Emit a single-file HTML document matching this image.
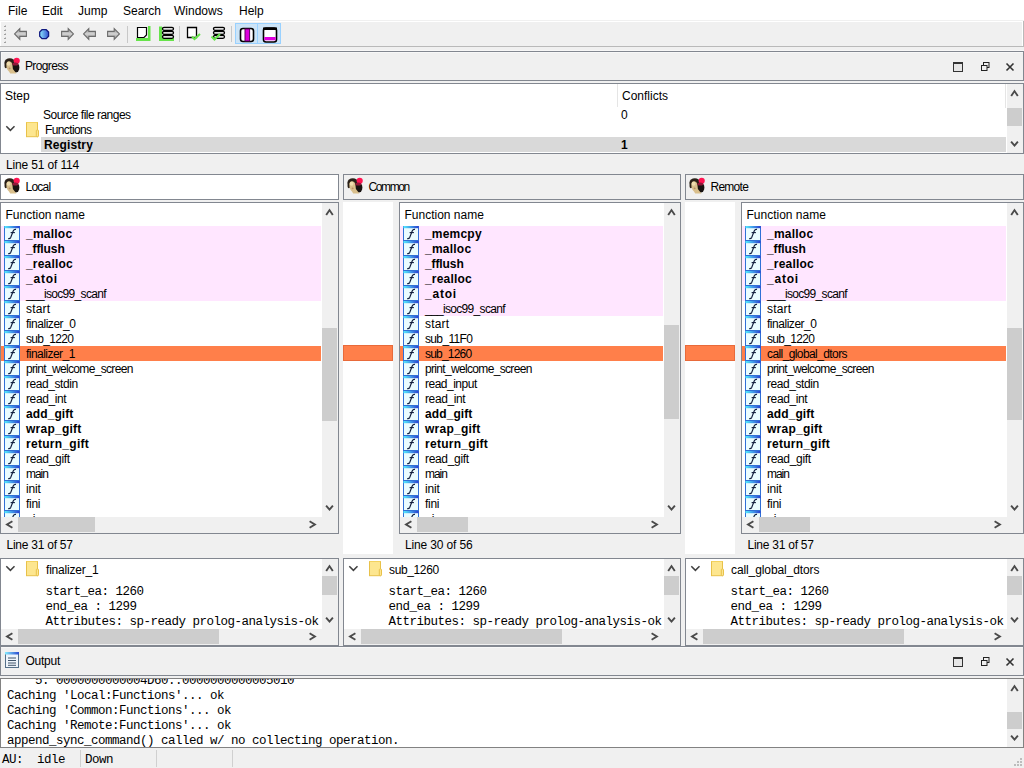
<!DOCTYPE html><html><head><meta charset="utf-8"><style>
html,body{margin:0;padding:0;width:1024px;height:768px;overflow:hidden;background:#f0f0f0;position:relative}
.t{position:absolute;white-space:pre;line-height:1;font-family:"Liberation Sans",sans-serif}
svg{overflow:visible}
</style></head><body>
<svg width="0" height="0" style="position:absolute"><defs>
<linearGradient id="fgrad" x1="0" x2="1"><stop offset="0" stop-color="#5ef"/><stop offset="1" stop-color="#2a3fd0"/></linearGradient>
<linearGradient id="bgrad" x1="0" x2="1"><stop offset="0" stop-color="#8ef"/><stop offset="1" stop-color="#2848d0"/></linearGradient>
</defs></svg>

<div style="position:absolute;left:0px;top:0px;width:1024px;height:20px;background:#fff;"></div>
<div style="position:absolute;left:0px;top:20px;width:1024px;height:1px;background:#f0f0f0;"></div>
<div style="position:absolute;left:0px;top:21px;width:1024px;height:1px;background:#fff;"></div>
<div class="t" style="left:8px;top:5.14px;font-size:12px;font-weight:normal;font-family:'Liberation Sans', sans-serif;color:#000;">File</div>
<div class="t" style="left:42px;top:5.14px;font-size:12px;font-weight:normal;font-family:'Liberation Sans', sans-serif;color:#000;">Edit</div>
<div class="t" style="left:78px;top:5.14px;font-size:12px;font-weight:normal;font-family:'Liberation Sans', sans-serif;color:#000;">Jump</div>
<div class="t" style="left:123px;top:5.14px;font-size:12px;font-weight:normal;font-family:'Liberation Sans', sans-serif;color:#000;">Search</div>
<div class="t" style="left:174px;top:5.14px;font-size:12px;font-weight:normal;font-family:'Liberation Sans', sans-serif;color:#000;">Windows</div>
<div class="t" style="left:239px;top:5.14px;font-size:12px;font-weight:normal;font-family:'Liberation Sans', sans-serif;color:#000;">Help</div>
<div style="position:absolute;left:0px;top:22px;width:1px;height:24px;background:#fff;"></div>
<div style="position:absolute;left:0px;top:46px;width:1024px;height:1px;background:#b9b9b9;"></div>
<div style="position:absolute;left:1022px;top:21px;width:1px;height:25px;background:#fff;"></div>
<div style="position:absolute;left:1023px;top:21px;width:1px;height:26px;background:#b9b9b9;"></div>
<div style="position:absolute;left:0px;top:50px;width:1024px;height:1px;background:#f7f7f7;"></div>
<div style="position:absolute;left:5px;top:25px;width:1px;height:1px;background:#c8c8c8;"></div>
<div style="position:absolute;left:4px;top:26px;width:2px;height:1px;background:#a0a0a0;"></div>
<div style="position:absolute;left:5px;top:29px;width:1px;height:1px;background:#c8c8c8;"></div>
<div style="position:absolute;left:4px;top:30px;width:2px;height:1px;background:#a0a0a0;"></div>
<div style="position:absolute;left:5px;top:33px;width:1px;height:1px;background:#c8c8c8;"></div>
<div style="position:absolute;left:4px;top:34px;width:2px;height:1px;background:#a0a0a0;"></div>
<div style="position:absolute;left:5px;top:37px;width:1px;height:1px;background:#c8c8c8;"></div>
<div style="position:absolute;left:4px;top:38px;width:2px;height:1px;background:#a0a0a0;"></div>
<div style="position:absolute;left:5px;top:41px;width:1px;height:1px;background:#c8c8c8;"></div>
<div style="position:absolute;left:4px;top:42px;width:2px;height:1px;background:#a0a0a0;"></div>
<svg style="position:absolute;left:14px;top:28px" width="14" height="12" viewBox="0 0 14 12"><defs><linearGradient id="ga14" x1="0" y1="0" x2="0" y2="1"><stop offset="0" stop-color="#8c8c8c"/><stop offset="0.5" stop-color="#d4d4d4"/><stop offset="1" stop-color="#8a8a8a"/></linearGradient></defs><polygon points="0.6,5.9 5.8,0.6 5.8,3.4 12.4,3.4 12.4,8.4 5.8,8.4 5.8,11.3" fill="url(#ga14)" stroke="#6c6c6c" stroke-width="1.1"/></svg>
<svg style="position:absolute;left:39px;top:29px" width="11" height="11" viewBox="0 0 11 11"><defs><linearGradient id="bc" x1="0" x2="1"><stop offset="0" stop-color="#8ee8ff"/><stop offset="1" stop-color="#3050d0"/></linearGradient></defs><polygon points="3,0.7 7.2,0.7 9.6,3 9.6,7.2 7.2,9.6 3,9.6 0.7,7.2 0.7,3" fill="url(#bc)" stroke="#101a80" stroke-width="1.3"/></svg>
<svg style="position:absolute;left:61px;top:28px" width="14" height="12" viewBox="0 0 14 12"><defs><linearGradient id="ga61" x1="0" y1="0" x2="0" y2="1"><stop offset="0" stop-color="#8c8c8c"/><stop offset="0.5" stop-color="#d4d4d4"/><stop offset="1" stop-color="#8a8a8a"/></linearGradient></defs><polygon points="12.4,5.9 7.2,0.6 7.2,3.4 0.6,3.4 0.6,8.4 7.2,8.4 7.2,11.3" fill="url(#ga61)" stroke="#6c6c6c" stroke-width="1.1"/></svg>
<svg style="position:absolute;left:83px;top:28px" width="14" height="12" viewBox="0 0 14 12"><defs><linearGradient id="ga83" x1="0" y1="0" x2="0" y2="1"><stop offset="0" stop-color="#8c8c8c"/><stop offset="0.5" stop-color="#d4d4d4"/><stop offset="1" stop-color="#8a8a8a"/></linearGradient></defs><polygon points="0.6,5.9 5.8,0.6 5.8,3.4 12.4,3.4 12.4,8.4 5.8,8.4 5.8,11.3" fill="url(#ga83)" stroke="#6c6c6c" stroke-width="1.1"/></svg>
<svg style="position:absolute;left:107px;top:28px" width="14" height="12" viewBox="0 0 14 12"><defs><linearGradient id="ga107" x1="0" y1="0" x2="0" y2="1"><stop offset="0" stop-color="#8c8c8c"/><stop offset="0.5" stop-color="#d4d4d4"/><stop offset="1" stop-color="#8a8a8a"/></linearGradient></defs><polygon points="12.4,5.9 7.2,0.6 7.2,3.4 0.6,3.4 0.6,8.4 7.2,8.4 7.2,11.3" fill="url(#ga107)" stroke="#6c6c6c" stroke-width="1.1"/></svg>
<div style="position:absolute;left:127px;top:26px;width:1px;height:17px;background:#c8c8c8;"></div>
<svg style="position:absolute;left:135px;top:25px" width="17" height="17" viewBox="0 0 17 17"><rect x="1" y="13" width="14" height="3" fill="#66e34a"/><rect x="13" y="1" width="2.5" height="15" fill="#66e34a"/><path d="M2.5,2.5 H11.5 V10 L9,12.5 H2.5 Z" fill="#fff" stroke="#000" stroke-width="1.2"/></svg>
<svg style="position:absolute;left:158px;top:25px" width="17" height="17" viewBox="0 0 17 17"><rect x="1" y="1.5" width="3" height="14" fill="#66e34a"/><rect x="1" y="13" width="15" height="3" fill="#66e34a"/><rect x="4.5" y="2.3" width="11" height="3" rx="1.5" fill="#ddd" stroke="#000" stroke-width="1.3"/><rect x="4.5" y="6.3" width="11" height="3" rx="1.5" fill="#ddd" stroke="#000" stroke-width="1.3"/><rect x="4.5" y="10.3" width="11" height="3" rx="1.5" fill="#ddd" stroke="#000" stroke-width="1.3"/></svg>
<div style="position:absolute;left:179px;top:26px;width:1px;height:16px;background:#c8c8c8;"></div>
<svg style="position:absolute;left:186px;top:25px" width="17" height="17" viewBox="0 0 17 17"><path d="M1.5,2.5 H10.5 V12.5 H1.5 Z" fill="#fff" stroke="#000" stroke-width="1.3"/><polyline points="6,11.5 8.5,14 14,9" fill="none" stroke="#66e34a" stroke-width="2"/></svg>
<svg style="position:absolute;left:210px;top:25px" width="17" height="17" viewBox="0 0 17 17"><rect x="3.5" y="2.3" width="11" height="3" rx="1.5" fill="#ddd" stroke="#000" stroke-width="1.3"/><rect x="3.5" y="6.3" width="11" height="3" rx="1.5" fill="#ddd" stroke="#000" stroke-width="1.3"/><rect x="3.5" y="10.3" width="11" height="3" rx="1.5" fill="#ddd" stroke="#000" stroke-width="1.3"/><polyline points="1.5,11.5 4.5,14.5 10,9" fill="none" stroke="#66e34a" stroke-width="2"/></svg>
<div style="position:absolute;left:231px;top:26px;width:1px;height:16px;background:#c8c8c8;"></div>
<div style="position:absolute;left:235px;top:23px;width:44px;height:19px;border:1px solid #99d1ff;background:#cce4f7;"></div>
<div style="position:absolute;left:257px;top:24px;width:1px;height:19px;background:#99d1ff;"></div>
<svg style="position:absolute;left:239px;top:27px" width="16" height="16" viewBox="0 0 16 16"><rect x="1.5" y="1.5" width="13" height="13" rx="2.5" fill="#fff" stroke="#000" stroke-width="1.6"/><rect x="6" y="2" width="4.6" height="12" fill="#dd00dd" stroke="#600060" stroke-width="1"/></svg>
<svg style="position:absolute;left:262px;top:27px" width="16" height="16" viewBox="0 0 16 16"><rect x="1.5" y="1" width="13" height="14" rx="2.5" fill="#fff" stroke="#000" stroke-width="1.6"/><rect x="1" y="0.5" width="14" height="2.5" fill="#000"/><rect x="2.3" y="10" width="11.4" height="3.3" fill="#dd00dd"/></svg>
<div style="position:absolute;left:0px;top:51px;width:1022px;height:28px;border:1px solid #828790;background:#f0f0f0;"></div>
<div style="position:absolute;left:1px;top:52px;width:1022px;height:1px;background:#f8f8f8;"></div>
<div style="position:absolute;left:1px;top:52px;width:1px;height:28px;background:#f8f8f8;"></div>
<svg style="position:absolute;left:4px;top:57px" width="17" height="17" viewBox="0 0 17 17"><ellipse cx="5.8" cy="5.4" rx="5.3" ry="4.2" fill="#2a2018"/><ellipse cx="1.9" cy="8" rx="1.4" ry="3.2" fill="#2a2018"/><ellipse cx="11.6" cy="10.6" rx="3.8" ry="5" fill="#181210"/><path d="M2.3,7.2 Q2.6,4 5.4,4.3 Q8.2,4.9 8.5,8.5 L8.9,12 L12.4,16.4 L6.2,16.6 L5,14.6 Q2.3,12.4 2.3,7.2 Z" fill="#d9bf8c"/><ellipse cx="4.6" cy="6.8" rx="1.9" ry="2" fill="#f0ddb0"/><ellipse cx="5.6" cy="11.4" rx="1" ry="0.8" fill="#b88a66"/><circle cx="12.7" cy="3.8" r="3.1" fill="#ff1452"/><ellipse cx="11.3" cy="7" rx="3" ry="1.6" fill="#8e1838"/></svg>
<div class="t" style="left:25px;top:60.14px;font-size:12px;font-weight:normal;font-family:'Liberation Sans', sans-serif;color:#000;letter-spacing:-0.643px;">Progress</div>
<svg style="position:absolute;left:952px;top:61px" width="12" height="12" viewBox="0 0 12 12"><rect x="1.5" y="1.5" width="9" height="9" fill="#e6e6e6" stroke="#333"/><rect x="1" y="1" width="10" height="2" fill="#333"/></svg>
<svg style="position:absolute;left:980px;top:61px" width="11" height="12" viewBox="0 0 11 12"><rect x="3.5" y="1.5" width="5.5" height="5" fill="#f0f0f0" stroke="#222"/><rect x="1.5" y="4.5" width="5.5" height="5" fill="#f0f0f0" stroke="#222"/></svg>
<svg style="position:absolute;left:1005px;top:62px" width="10" height="10" viewBox="0 0 10 10"><path d="M1.5,1.5 L8.5,8.5 M8.5,1.5 L1.5,8.5" stroke="#333" stroke-width="1.6"/></svg>
<div style="position:absolute;left:0px;top:83px;width:1022px;height:69px;border:1px solid #828790;background:#fff;"></div>
<div style="position:absolute;left:617px;top:84px;width:1px;height:23px;background:#e5e5e5;"></div>
<div class="t" style="left:5px;top:90.14px;font-size:12px;font-weight:normal;font-family:'Liberation Sans', sans-serif;color:#000;">Step</div>
<div class="t" style="left:622px;top:90.14px;font-size:12px;font-weight:normal;font-family:'Liberation Sans', sans-serif;color:#000;">Conflicts</div>
<div class="t" style="left:43px;top:109.14px;font-size:12px;font-weight:normal;font-family:'Liberation Sans', sans-serif;color:#000;letter-spacing:-0.506px;">Source file ranges</div>
<div class="t" style="left:621px;top:109.14px;font-size:12px;font-weight:normal;font-family:'Liberation Sans', sans-serif;color:#000;">0</div>
<svg style="position:absolute;left:5px;top:125px" width="10" height="7" viewBox="0 0 10 7"><polyline points="1.3,1.3 5.4,5.4 9.5,1.3" fill="none" stroke="#404040" stroke-width="1.5"/></svg>
<svg style="position:absolute;left:26px;top:122px" width="14" height="16" viewBox="0 0 14 16"><rect x="0.5" y="0.5" width="11" height="14.2" fill="#fde68f" stroke="#e8c14a"/><rect x="0.5" y="0" width="11" height="1" fill="#f3d25e"/><rect x="10.3" y="8" width="2.2" height="6.7" rx="0.8" fill="#fde68f" stroke="#e8c14a"/></svg>
<div class="t" style="left:45px;top:124.14px;font-size:12px;font-weight:normal;font-family:'Liberation Sans', sans-serif;color:#000;letter-spacing:-0.613px;">Functions</div>
<div style="position:absolute;left:41px;top:137px;width:965px;height:15px;background:#d9d9d9;"></div>
<div class="t" style="left:44px;top:138.64px;font-size:12px;font-weight:bold;font-family:'Liberation Sans', sans-serif;color:#000;letter-spacing:0.114px;">Registry</div>
<div class="t" style="left:621px;top:138.64px;font-size:12px;font-weight:bold;font-family:'Liberation Sans', sans-serif;color:#000;">1</div>
<div style="position:absolute;left:1007px;top:84px;width:16px;height:69px;background:#f0f0f0;"></div>
<div style="position:absolute;left:1007px;top:108px;width:15px;height:18px;background:#cdcdcd;"></div>
<svg style="position:absolute;left:1010.0px;top:87.5px" width="10" height="10" viewBox="0 0 10 10"><polyline points="1.2,8.1 4.5,3.1 7.8,8.1" fill="none" stroke="#4a4a4a" stroke-width="1.9"/></svg>
<svg style="position:absolute;left:1010.0px;top:141px" width="10" height="10" viewBox="0 0 10 10"><polyline points="1.1,0.6 4.5,4.6 7.9,0.6" fill="none" stroke="#4a4a4a" stroke-width="1.9"/></svg>
<div style="position:absolute;left:1006px;top:84px;width:1px;height:69px;background:#fff;"></div>
<div style="position:absolute;left:1005px;top:84px;width:1px;height:24px;background:#e5e5e5;"></div>
<div class="t" style="left:6px;top:158.64px;font-size:12px;font-weight:normal;font-family:'Liberation Sans', sans-serif;color:#000;letter-spacing:-0.146px;">Line 51 of 114</div>
<div style="position:absolute;left:0px;top:174px;width:337px;height:24px;border:1px solid #828790;background:#fff;"></div>
<svg style="position:absolute;left:4px;top:177px" width="17" height="17" viewBox="0 0 17 17"><ellipse cx="5.8" cy="5.4" rx="5.3" ry="4.2" fill="#2a2018"/><ellipse cx="1.9" cy="8" rx="1.4" ry="3.2" fill="#2a2018"/><ellipse cx="11.6" cy="10.6" rx="3.8" ry="5" fill="#181210"/><path d="M2.3,7.2 Q2.6,4 5.4,4.3 Q8.2,4.9 8.5,8.5 L8.9,12 L12.4,16.4 L6.2,16.6 L5,14.6 Q2.3,12.4 2.3,7.2 Z" fill="#d9bf8c"/><ellipse cx="4.6" cy="6.8" rx="1.9" ry="2" fill="#f0ddb0"/><ellipse cx="5.6" cy="11.4" rx="1" ry="0.8" fill="#b88a66"/><circle cx="12.7" cy="3.8" r="3.1" fill="#ff1452"/><ellipse cx="11.3" cy="7" rx="3" ry="1.6" fill="#8e1838"/></svg>
<div class="t" style="left:25.5px;top:180.64px;font-size:12px;font-weight:normal;font-family:'Liberation Sans', sans-serif;color:#000;letter-spacing:-0.750px;">Local</div>
<div style="position:absolute;left:0px;top:202px;width:337px;height:330px;border:1px solid #828790;background:#fff;"></div>
<div class="t" style="left:5.5px;top:208.64px;font-size:12px;font-weight:normal;font-family:'Liberation Sans', sans-serif;color:#000;">Function name</div>
<div style="position:absolute;left:1px;top:203px;width:320px;height:314px;overflow:hidden">
<div style="position:absolute;left:0;top:23px;width:320px;height:15px;background:#ffe6ff"></div>
<div style="position:absolute;left:0;top:38px;width:320px;height:15px;background:#ffe6ff"></div>
<div style="position:absolute;left:0;top:53px;width:320px;height:15px;background:#ffe6ff"></div>
<div style="position:absolute;left:0;top:68px;width:320px;height:15px;background:#ffe6ff"></div>
<div style="position:absolute;left:0;top:83px;width:320px;height:15px;background:#ffe6ff"></div>
<div style="position:absolute;left:0;top:143px;width:320px;height:15px;background:#ff7f4a"></div>
</div>
<div style="position:absolute;left:1px;top:203px;width:320px;height:314px;overflow:hidden">
<svg style="position:absolute;left:3px;top:23px" width="16" height="15" viewBox="0 0 16 15"><rect x="0.5" y="0.5" width="15" height="14" fill="#eafcff" stroke="#2f6fd6"/><rect x="0.5" y="0" width="15" height="2.2" fill="url(#fgrad)"/><path d="M12,3.4 Q10.2,2.9 9.3,4.8 L6.7,11.5 Q6.1,12.9 4.2,12.6" fill="none" stroke="#101c3c" stroke-width="1.15"/><path d="M6.6,6.6 L10.9,6.6" stroke="#101c3c" stroke-width="1.1"/></svg>
<div class="t" style="left:25px;top:24.80px;font-size:12px;font-weight:bold;letter-spacing:0.233px;">_malloc</div>
<svg style="position:absolute;left:3px;top:38px" width="16" height="15" viewBox="0 0 16 15"><rect x="0.5" y="0.5" width="15" height="14" fill="#eafcff" stroke="#2f6fd6"/><rect x="0.5" y="0" width="15" height="2.2" fill="url(#fgrad)"/><path d="M12,3.4 Q10.2,2.9 9.3,4.8 L6.7,11.5 Q6.1,12.9 4.2,12.6" fill="none" stroke="#101c3c" stroke-width="1.15"/><path d="M6.6,6.6 L10.9,6.6" stroke="#101c3c" stroke-width="1.1"/></svg>
<div class="t" style="left:25px;top:39.80px;font-size:12px;font-weight:bold;letter-spacing:-0.100px;">_fflush</div>
<svg style="position:absolute;left:3px;top:53px" width="16" height="15" viewBox="0 0 16 15"><rect x="0.5" y="0.5" width="15" height="14" fill="#eafcff" stroke="#2f6fd6"/><rect x="0.5" y="0" width="15" height="2.2" fill="url(#fgrad)"/><path d="M12,3.4 Q10.2,2.9 9.3,4.8 L6.7,11.5 Q6.1,12.9 4.2,12.6" fill="none" stroke="#101c3c" stroke-width="1.15"/><path d="M6.6,6.6 L10.9,6.6" stroke="#101c3c" stroke-width="1.1"/></svg>
<div class="t" style="left:25px;top:54.80px;font-size:12px;font-weight:bold;letter-spacing:0.171px;">_realloc</div>
<svg style="position:absolute;left:3px;top:68px" width="16" height="15" viewBox="0 0 16 15"><rect x="0.5" y="0.5" width="15" height="14" fill="#eafcff" stroke="#2f6fd6"/><rect x="0.5" y="0" width="15" height="2.2" fill="url(#fgrad)"/><path d="M12,3.4 Q10.2,2.9 9.3,4.8 L6.7,11.5 Q6.1,12.9 4.2,12.6" fill="none" stroke="#101c3c" stroke-width="1.15"/><path d="M6.6,6.6 L10.9,6.6" stroke="#101c3c" stroke-width="1.1"/></svg>
<div class="t" style="left:25px;top:69.80px;font-size:12px;font-weight:bold;letter-spacing:0.800px;">_atoi</div>
<svg style="position:absolute;left:3px;top:83px" width="16" height="15" viewBox="0 0 16 15"><rect x="0.5" y="0.5" width="15" height="14" fill="#eafcff" stroke="#2f6fd6"/><rect x="0.5" y="0" width="15" height="2.2" fill="url(#fgrad)"/><path d="M12,3.4 Q10.2,2.9 9.3,4.8 L6.7,11.5 Q6.1,12.9 4.2,12.6" fill="none" stroke="#101c3c" stroke-width="1.15"/><path d="M6.6,6.6 L10.9,6.6" stroke="#101c3c" stroke-width="1.1"/></svg>
<div class="t" style="left:25px;top:84.80px;font-size:12px;font-weight:normal;letter-spacing:-0.679px;">___isoc99_scanf</div>
<svg style="position:absolute;left:3px;top:98px" width="16" height="15" viewBox="0 0 16 15"><rect x="0.5" y="0.5" width="15" height="14" fill="#eafcff" stroke="#2f6fd6"/><rect x="0.5" y="0" width="15" height="2.2" fill="url(#fgrad)"/><path d="M12,3.4 Q10.2,2.9 9.3,4.8 L6.7,11.5 Q6.1,12.9 4.2,12.6" fill="none" stroke="#101c3c" stroke-width="1.15"/><path d="M6.6,6.6 L10.9,6.6" stroke="#101c3c" stroke-width="1.1"/></svg>
<div class="t" style="left:25px;top:99.80px;font-size:12px;font-weight:normal;letter-spacing:0.175px;">start</div>
<svg style="position:absolute;left:3px;top:113px" width="16" height="15" viewBox="0 0 16 15"><rect x="0.5" y="0.5" width="15" height="14" fill="#eafcff" stroke="#2f6fd6"/><rect x="0.5" y="0" width="15" height="2.2" fill="url(#fgrad)"/><path d="M12,3.4 Q10.2,2.9 9.3,4.8 L6.7,11.5 Q6.1,12.9 4.2,12.6" fill="none" stroke="#101c3c" stroke-width="1.15"/><path d="M6.6,6.6 L10.9,6.6" stroke="#101c3c" stroke-width="1.1"/></svg>
<div class="t" style="left:25px;top:114.80px;font-size:12px;font-weight:normal;letter-spacing:-0.470px;">finalizer_0</div>
<svg style="position:absolute;left:3px;top:128px" width="16" height="15" viewBox="0 0 16 15"><rect x="0.5" y="0.5" width="15" height="14" fill="#eafcff" stroke="#2f6fd6"/><rect x="0.5" y="0" width="15" height="2.2" fill="url(#fgrad)"/><path d="M12,3.4 Q10.2,2.9 9.3,4.8 L6.7,11.5 Q6.1,12.9 4.2,12.6" fill="none" stroke="#101c3c" stroke-width="1.15"/><path d="M6.6,6.6 L10.9,6.6" stroke="#101c3c" stroke-width="1.1"/></svg>
<div class="t" style="left:25px;top:129.80px;font-size:12px;font-weight:normal;letter-spacing:-0.700px;">sub_1220</div>
<svg style="position:absolute;left:3px;top:143px" width="16" height="15" viewBox="0 0 16 15"><rect x="0.5" y="0.5" width="15" height="14" fill="#eafcff" stroke="#2f6fd6"/><rect x="0.5" y="0" width="15" height="2.2" fill="url(#fgrad)"/><path d="M12,3.4 Q10.2,2.9 9.3,4.8 L6.7,11.5 Q6.1,12.9 4.2,12.6" fill="none" stroke="#101c3c" stroke-width="1.15"/><path d="M6.6,6.6 L10.9,6.6" stroke="#101c3c" stroke-width="1.1"/></svg>
<div class="t" style="left:25px;top:144.80px;font-size:12px;font-weight:normal;letter-spacing:-0.530px;">finalizer_1</div>
<svg style="position:absolute;left:3px;top:158px" width="16" height="15" viewBox="0 0 16 15"><rect x="0.5" y="0.5" width="15" height="14" fill="#eafcff" stroke="#2f6fd6"/><rect x="0.5" y="0" width="15" height="2.2" fill="url(#fgrad)"/><path d="M12,3.4 Q10.2,2.9 9.3,4.8 L6.7,11.5 Q6.1,12.9 4.2,12.6" fill="none" stroke="#101c3c" stroke-width="1.15"/><path d="M6.6,6.6 L10.9,6.6" stroke="#101c3c" stroke-width="1.1"/></svg>
<div class="t" style="left:25px;top:159.80px;font-size:12px;font-weight:normal;letter-spacing:-0.668px;">print_welcome_screen</div>
<svg style="position:absolute;left:3px;top:173px" width="16" height="15" viewBox="0 0 16 15"><rect x="0.5" y="0.5" width="15" height="14" fill="#eafcff" stroke="#2f6fd6"/><rect x="0.5" y="0" width="15" height="2.2" fill="url(#fgrad)"/><path d="M12,3.4 Q10.2,2.9 9.3,4.8 L6.7,11.5 Q6.1,12.9 4.2,12.6" fill="none" stroke="#101c3c" stroke-width="1.15"/><path d="M6.6,6.6 L10.9,6.6" stroke="#101c3c" stroke-width="1.1"/></svg>
<div class="t" style="left:25px;top:174.80px;font-size:12px;font-weight:normal;letter-spacing:-0.439px;">read_stdin</div>
<svg style="position:absolute;left:3px;top:188px" width="16" height="15" viewBox="0 0 16 15"><rect x="0.5" y="0.5" width="15" height="14" fill="#eafcff" stroke="#2f6fd6"/><rect x="0.5" y="0" width="15" height="2.2" fill="url(#fgrad)"/><path d="M12,3.4 Q10.2,2.9 9.3,4.8 L6.7,11.5 Q6.1,12.9 4.2,12.6" fill="none" stroke="#101c3c" stroke-width="1.15"/><path d="M6.6,6.6 L10.9,6.6" stroke="#101c3c" stroke-width="1.1"/></svg>
<div class="t" style="left:25px;top:189.80px;font-size:12px;font-weight:normal;letter-spacing:-0.386px;">read_int</div>
<svg style="position:absolute;left:3px;top:203px" width="16" height="15" viewBox="0 0 16 15"><rect x="0.5" y="0.5" width="15" height="14" fill="#eafcff" stroke="#2f6fd6"/><rect x="0.5" y="0" width="15" height="2.2" fill="url(#fgrad)"/><path d="M12,3.4 Q10.2,2.9 9.3,4.8 L6.7,11.5 Q6.1,12.9 4.2,12.6" fill="none" stroke="#101c3c" stroke-width="1.15"/><path d="M6.6,6.6 L10.9,6.6" stroke="#101c3c" stroke-width="1.1"/></svg>
<div class="t" style="left:25px;top:204.80px;font-size:12px;font-weight:bold;letter-spacing:0.100px;">add_gift</div>
<svg style="position:absolute;left:3px;top:218px" width="16" height="15" viewBox="0 0 16 15"><rect x="0.5" y="0.5" width="15" height="14" fill="#eafcff" stroke="#2f6fd6"/><rect x="0.5" y="0" width="15" height="2.2" fill="url(#fgrad)"/><path d="M12,3.4 Q10.2,2.9 9.3,4.8 L6.7,11.5 Q6.1,12.9 4.2,12.6" fill="none" stroke="#101c3c" stroke-width="1.15"/><path d="M6.6,6.6 L10.9,6.6" stroke="#101c3c" stroke-width="1.1"/></svg>
<div class="t" style="left:25px;top:219.80px;font-size:12px;font-weight:bold;letter-spacing:0.250px;">wrap_gift</div>
<svg style="position:absolute;left:3px;top:233px" width="16" height="15" viewBox="0 0 16 15"><rect x="0.5" y="0.5" width="15" height="14" fill="#eafcff" stroke="#2f6fd6"/><rect x="0.5" y="0" width="15" height="2.2" fill="url(#fgrad)"/><path d="M12,3.4 Q10.2,2.9 9.3,4.8 L6.7,11.5 Q6.1,12.9 4.2,12.6" fill="none" stroke="#101c3c" stroke-width="1.15"/><path d="M6.6,6.6 L10.9,6.6" stroke="#101c3c" stroke-width="1.1"/></svg>
<div class="t" style="left:25px;top:234.80px;font-size:12px;font-weight:bold;letter-spacing:0.280px;">return_gift</div>
<svg style="position:absolute;left:3px;top:248px" width="16" height="15" viewBox="0 0 16 15"><rect x="0.5" y="0.5" width="15" height="14" fill="#eafcff" stroke="#2f6fd6"/><rect x="0.5" y="0" width="15" height="2.2" fill="url(#fgrad)"/><path d="M12,3.4 Q10.2,2.9 9.3,4.8 L6.7,11.5 Q6.1,12.9 4.2,12.6" fill="none" stroke="#101c3c" stroke-width="1.15"/><path d="M6.6,6.6 L10.9,6.6" stroke="#101c3c" stroke-width="1.1"/></svg>
<div class="t" style="left:25px;top:249.80px;font-size:12px;font-weight:normal;letter-spacing:-0.325px;">read_gift</div>
<svg style="position:absolute;left:3px;top:263px" width="16" height="15" viewBox="0 0 16 15"><rect x="0.5" y="0.5" width="15" height="14" fill="#eafcff" stroke="#2f6fd6"/><rect x="0.5" y="0" width="15" height="2.2" fill="url(#fgrad)"/><path d="M12,3.4 Q10.2,2.9 9.3,4.8 L6.7,11.5 Q6.1,12.9 4.2,12.6" fill="none" stroke="#101c3c" stroke-width="1.15"/><path d="M6.6,6.6 L10.9,6.6" stroke="#101c3c" stroke-width="1.1"/></svg>
<div class="t" style="left:25px;top:264.80px;font-size:12px;font-weight:normal;letter-spacing:-1.067px;">main</div>
<svg style="position:absolute;left:3px;top:278px" width="16" height="15" viewBox="0 0 16 15"><rect x="0.5" y="0.5" width="15" height="14" fill="#eafcff" stroke="#2f6fd6"/><rect x="0.5" y="0" width="15" height="2.2" fill="url(#fgrad)"/><path d="M12,3.4 Q10.2,2.9 9.3,4.8 L6.7,11.5 Q6.1,12.9 4.2,12.6" fill="none" stroke="#101c3c" stroke-width="1.15"/><path d="M6.6,6.6 L10.9,6.6" stroke="#101c3c" stroke-width="1.1"/></svg>
<div class="t" style="left:25px;top:279.80px;font-size:12px;font-weight:normal;letter-spacing:-0.167px;">init</div>
<svg style="position:absolute;left:3px;top:293px" width="16" height="15" viewBox="0 0 16 15"><rect x="0.5" y="0.5" width="15" height="14" fill="#eafcff" stroke="#2f6fd6"/><rect x="0.5" y="0" width="15" height="2.2" fill="url(#fgrad)"/><path d="M12,3.4 Q10.2,2.9 9.3,4.8 L6.7,11.5 Q6.1,12.9 4.2,12.6" fill="none" stroke="#101c3c" stroke-width="1.15"/><path d="M6.6,6.6 L10.9,6.6" stroke="#101c3c" stroke-width="1.1"/></svg>
<div class="t" style="left:25px;top:294.80px;font-size:12px;font-weight:normal;letter-spacing:-0.300px;">fini</div>
<svg style="position:absolute;left:3px;top:308px" width="16" height="15" viewBox="0 0 16 15"><rect x="0.5" y="0.5" width="15" height="14" fill="#eafcff" stroke="#2f6fd6"/><rect x="0.5" y="0" width="15" height="2.2" fill="url(#fgrad)"/><path d="M12,3.4 Q10.2,2.9 9.3,4.8 L6.7,11.5 Q6.1,12.9 4.2,12.6" fill="none" stroke="#101c3c" stroke-width="1.15"/><path d="M6.6,6.6 L10.9,6.6" stroke="#101c3c" stroke-width="1.1"/></svg>
<div class="t" style="left:25px;top:309.80px;font-size:12px;font-weight:normal;">_i</div>
</div>
<div style="position:absolute;left:322px;top:203px;width:16px;height:314px;background:#f0f0f0;"></div>
<div style="position:absolute;left:322px;top:328px;width:15px;height:93px;background:#cdcdcd;"></div>
<svg style="position:absolute;left:325.0px;top:206.5px" width="10" height="10" viewBox="0 0 10 10"><polyline points="1.2,8.1 4.5,3.1 7.8,8.1" fill="none" stroke="#4a4a4a" stroke-width="1.9"/></svg>
<svg style="position:absolute;left:325.0px;top:505px" width="10" height="10" viewBox="0 0 10 10"><polyline points="1.1,0.6 4.5,4.6 7.9,0.6" fill="none" stroke="#4a4a4a" stroke-width="1.9"/></svg>
<div style="position:absolute;left:1px;top:517px;width:321px;height:16px;background:#f0f0f0;"></div>
<div style="position:absolute;left:18px;top:517px;width:77px;height:15px;background:#cdcdcd;"></div>
<svg style="position:absolute;left:5.5px;top:520.0px" width="10" height="10" viewBox="0 0 10 10"><polyline points="6.4,1.2 1.0,4.5 6.4,7.8" fill="none" stroke="#4a4a4a" stroke-width="1.9"/></svg>
<svg style="position:absolute;left:308.5px;top:520.0px" width="10" height="10" viewBox="0 0 10 10"><polyline points="0.6,1.2 5.9,4.5 0.6,7.8" fill="none" stroke="#4a4a4a" stroke-width="1.9"/></svg>
<div style="position:absolute;left:322px;top:517px;width:16px;height:16px;background:#f0f0f0;"></div>
<div class="t" style="left:6.5px;top:539.14px;font-size:12px;font-weight:normal;font-family:'Liberation Sans', sans-serif;color:#000;letter-spacing:-0.250px;">Line 31 of 57</div>
<div style="position:absolute;left:0px;top:558px;width:337px;height:86px;border:1px solid #828790;background:#fff;"></div>
<svg style="position:absolute;left:5px;top:565px" width="10" height="7" viewBox="0 0 10 7"><polyline points="1.3,1.3 5.4,5.4 9.5,1.3" fill="none" stroke="#404040" stroke-width="1.5"/></svg>
<svg style="position:absolute;left:26px;top:561px" width="14" height="16" viewBox="0 0 14 16"><rect x="0.5" y="0.5" width="11" height="14.2" fill="#fde68f" stroke="#e8c14a"/><rect x="0.5" y="0" width="11" height="1" fill="#f3d25e"/><rect x="10.3" y="8" width="2.2" height="6.7" rx="0.8" fill="#fde68f" stroke="#e8c14a"/></svg>
<div class="t" style="left:46px;top:564.14px;font-size:12px;font-weight:normal;font-family:'Liberation Sans', sans-serif;color:#000;letter-spacing:-0.200px;">finalizer_1</div>
<div class="t" style="left:45.5px;top:586.29px;font-size:12.5px;font-weight:normal;font-family:'Liberation Mono', monospace;color:#000;letter-spacing:-0.5px">start_ea: 1260</div>
<div class="t" style="left:45.5px;top:601.09px;font-size:12.5px;font-weight:normal;font-family:'Liberation Mono', monospace;color:#000;letter-spacing:-0.5px">end_ea : 1299</div>
<div class="t" style="left:45.5px;top:616.09px;font-size:12.5px;font-weight:normal;font-family:'Liberation Mono', monospace;color:#000;letter-spacing:-0.5px">Attributes: sp-ready prolog-analysis-ok</div>
<div style="position:absolute;left:322px;top:559px;width:16px;height:70px;background:#f0f0f0;"></div>
<div style="position:absolute;left:322px;top:576px;width:15px;height:19px;background:#cdcdcd;"></div>
<svg style="position:absolute;left:325.0px;top:562.5px" width="10" height="10" viewBox="0 0 10 10"><polyline points="1.2,8.1 4.5,3.1 7.8,8.1" fill="none" stroke="#4a4a4a" stroke-width="1.9"/></svg>
<svg style="position:absolute;left:325.0px;top:617px" width="10" height="10" viewBox="0 0 10 10"><polyline points="1.1,0.6 4.5,4.6 7.9,0.6" fill="none" stroke="#4a4a4a" stroke-width="1.9"/></svg>
<div style="position:absolute;left:1px;top:629px;width:321px;height:16px;background:#f0f0f0;"></div>
<div style="position:absolute;left:18px;top:629px;width:201px;height:15px;background:#cdcdcd;"></div>
<svg style="position:absolute;left:5.5px;top:632.0px" width="10" height="10" viewBox="0 0 10 10"><polyline points="6.4,1.2 1.0,4.5 6.4,7.8" fill="none" stroke="#4a4a4a" stroke-width="1.9"/></svg>
<svg style="position:absolute;left:308.5px;top:632.0px" width="10" height="10" viewBox="0 0 10 10"><polyline points="0.6,1.2 5.9,4.5 0.6,7.8" fill="none" stroke="#4a4a4a" stroke-width="1.9"/></svg>
<div style="position:absolute;left:322px;top:629px;width:16px;height:16px;background:#f0f0f0;"></div>
<div style="position:absolute;left:343px;top:174px;width:336px;height:24px;border:1px solid #828790;background:#f0f0f0;"></div>
<svg style="position:absolute;left:347px;top:177px" width="17" height="17" viewBox="0 0 17 17"><ellipse cx="5.8" cy="5.4" rx="5.3" ry="4.2" fill="#2a2018"/><ellipse cx="1.9" cy="8" rx="1.4" ry="3.2" fill="#2a2018"/><ellipse cx="11.6" cy="10.6" rx="3.8" ry="5" fill="#181210"/><path d="M2.3,7.2 Q2.6,4 5.4,4.3 Q8.2,4.9 8.5,8.5 L8.9,12 L12.4,16.4 L6.2,16.6 L5,14.6 Q2.3,12.4 2.3,7.2 Z" fill="#d9bf8c"/><ellipse cx="4.6" cy="6.8" rx="1.9" ry="2" fill="#f0ddb0"/><ellipse cx="5.6" cy="11.4" rx="1" ry="0.8" fill="#b88a66"/><circle cx="12.7" cy="3.8" r="3.1" fill="#ff1452"/><ellipse cx="11.3" cy="7" rx="3" ry="1.6" fill="#8e1838"/></svg>
<div class="t" style="left:368.5px;top:180.64px;font-size:12px;font-weight:normal;font-family:'Liberation Sans', sans-serif;color:#000;letter-spacing:-1.400px;">Common</div>
<div style="position:absolute;left:343px;top:202px;width:50px;height:352px;background:#fff;"></div>
<div style="position:absolute;left:343px;top:345px;width:48px;height:14px;border:1px solid #e86a3a;background:#ff7f4a;"></div>
<div style="position:absolute;left:399px;top:202px;width:280px;height:330px;border:1px solid #828790;background:#fff;"></div>
<div class="t" style="left:404.5px;top:208.64px;font-size:12px;font-weight:normal;font-family:'Liberation Sans', sans-serif;color:#000;">Function name</div>
<div style="position:absolute;left:400px;top:203px;width:263px;height:314px;overflow:hidden">
<div style="position:absolute;left:0;top:23px;width:263px;height:15px;background:#ffe6ff"></div>
<div style="position:absolute;left:0;top:38px;width:263px;height:15px;background:#ffe6ff"></div>
<div style="position:absolute;left:0;top:53px;width:263px;height:15px;background:#ffe6ff"></div>
<div style="position:absolute;left:0;top:68px;width:263px;height:15px;background:#ffe6ff"></div>
<div style="position:absolute;left:0;top:83px;width:263px;height:15px;background:#ffe6ff"></div>
<div style="position:absolute;left:0;top:98px;width:263px;height:15px;background:#ffe6ff"></div>
<div style="position:absolute;left:0;top:143px;width:263px;height:15px;background:#ff7f4a"></div>
</div>
<div style="position:absolute;left:400px;top:203px;width:263px;height:314px;overflow:hidden">
<svg style="position:absolute;left:3px;top:23px" width="16" height="15" viewBox="0 0 16 15"><rect x="0.5" y="0.5" width="15" height="14" fill="#eafcff" stroke="#2f6fd6"/><rect x="0.5" y="0" width="15" height="2.2" fill="url(#fgrad)"/><path d="M12,3.4 Q10.2,2.9 9.3,4.8 L6.7,11.5 Q6.1,12.9 4.2,12.6" fill="none" stroke="#101c3c" stroke-width="1.15"/><path d="M6.6,6.6 L10.9,6.6" stroke="#101c3c" stroke-width="1.1"/></svg>
<div class="t" style="left:25px;top:24.80px;font-size:12px;font-weight:bold;letter-spacing:0.200px;">_memcpy</div>
<svg style="position:absolute;left:3px;top:38px" width="16" height="15" viewBox="0 0 16 15"><rect x="0.5" y="0.5" width="15" height="14" fill="#eafcff" stroke="#2f6fd6"/><rect x="0.5" y="0" width="15" height="2.2" fill="url(#fgrad)"/><path d="M12,3.4 Q10.2,2.9 9.3,4.8 L6.7,11.5 Q6.1,12.9 4.2,12.6" fill="none" stroke="#101c3c" stroke-width="1.15"/><path d="M6.6,6.6 L10.9,6.6" stroke="#101c3c" stroke-width="1.1"/></svg>
<div class="t" style="left:25px;top:39.80px;font-size:12px;font-weight:bold;letter-spacing:0.233px;">_malloc</div>
<svg style="position:absolute;left:3px;top:53px" width="16" height="15" viewBox="0 0 16 15"><rect x="0.5" y="0.5" width="15" height="14" fill="#eafcff" stroke="#2f6fd6"/><rect x="0.5" y="0" width="15" height="2.2" fill="url(#fgrad)"/><path d="M12,3.4 Q10.2,2.9 9.3,4.8 L6.7,11.5 Q6.1,12.9 4.2,12.6" fill="none" stroke="#101c3c" stroke-width="1.15"/><path d="M6.6,6.6 L10.9,6.6" stroke="#101c3c" stroke-width="1.1"/></svg>
<div class="t" style="left:25px;top:54.80px;font-size:12px;font-weight:bold;letter-spacing:-0.100px;">_fflush</div>
<svg style="position:absolute;left:3px;top:68px" width="16" height="15" viewBox="0 0 16 15"><rect x="0.5" y="0.5" width="15" height="14" fill="#eafcff" stroke="#2f6fd6"/><rect x="0.5" y="0" width="15" height="2.2" fill="url(#fgrad)"/><path d="M12,3.4 Q10.2,2.9 9.3,4.8 L6.7,11.5 Q6.1,12.9 4.2,12.6" fill="none" stroke="#101c3c" stroke-width="1.15"/><path d="M6.6,6.6 L10.9,6.6" stroke="#101c3c" stroke-width="1.1"/></svg>
<div class="t" style="left:25px;top:69.80px;font-size:12px;font-weight:bold;letter-spacing:0.171px;">_realloc</div>
<svg style="position:absolute;left:3px;top:83px" width="16" height="15" viewBox="0 0 16 15"><rect x="0.5" y="0.5" width="15" height="14" fill="#eafcff" stroke="#2f6fd6"/><rect x="0.5" y="0" width="15" height="2.2" fill="url(#fgrad)"/><path d="M12,3.4 Q10.2,2.9 9.3,4.8 L6.7,11.5 Q6.1,12.9 4.2,12.6" fill="none" stroke="#101c3c" stroke-width="1.15"/><path d="M6.6,6.6 L10.9,6.6" stroke="#101c3c" stroke-width="1.1"/></svg>
<div class="t" style="left:25px;top:84.80px;font-size:12px;font-weight:bold;letter-spacing:0.800px;">_atoi</div>
<svg style="position:absolute;left:3px;top:98px" width="16" height="15" viewBox="0 0 16 15"><rect x="0.5" y="0.5" width="15" height="14" fill="#eafcff" stroke="#2f6fd6"/><rect x="0.5" y="0" width="15" height="2.2" fill="url(#fgrad)"/><path d="M12,3.4 Q10.2,2.9 9.3,4.8 L6.7,11.5 Q6.1,12.9 4.2,12.6" fill="none" stroke="#101c3c" stroke-width="1.15"/><path d="M6.6,6.6 L10.9,6.6" stroke="#101c3c" stroke-width="1.1"/></svg>
<div class="t" style="left:25px;top:99.80px;font-size:12px;font-weight:normal;letter-spacing:-0.679px;">___isoc99_scanf</div>
<svg style="position:absolute;left:3px;top:113px" width="16" height="15" viewBox="0 0 16 15"><rect x="0.5" y="0.5" width="15" height="14" fill="#eafcff" stroke="#2f6fd6"/><rect x="0.5" y="0" width="15" height="2.2" fill="url(#fgrad)"/><path d="M12,3.4 Q10.2,2.9 9.3,4.8 L6.7,11.5 Q6.1,12.9 4.2,12.6" fill="none" stroke="#101c3c" stroke-width="1.15"/><path d="M6.6,6.6 L10.9,6.6" stroke="#101c3c" stroke-width="1.1"/></svg>
<div class="t" style="left:25px;top:114.80px;font-size:12px;font-weight:normal;letter-spacing:0.175px;">start</div>
<svg style="position:absolute;left:3px;top:128px" width="16" height="15" viewBox="0 0 16 15"><rect x="0.5" y="0.5" width="15" height="14" fill="#eafcff" stroke="#2f6fd6"/><rect x="0.5" y="0" width="15" height="2.2" fill="url(#fgrad)"/><path d="M12,3.4 Q10.2,2.9 9.3,4.8 L6.7,11.5 Q6.1,12.9 4.2,12.6" fill="none" stroke="#101c3c" stroke-width="1.15"/><path d="M6.6,6.6 L10.9,6.6" stroke="#101c3c" stroke-width="1.1"/></svg>
<div class="t" style="left:25px;top:129.80px;font-size:12px;font-weight:normal;letter-spacing:-0.657px;">sub_11F0</div>
<svg style="position:absolute;left:3px;top:143px" width="16" height="15" viewBox="0 0 16 15"><rect x="0.5" y="0.5" width="15" height="14" fill="#eafcff" stroke="#2f6fd6"/><rect x="0.5" y="0" width="15" height="2.2" fill="url(#fgrad)"/><path d="M12,3.4 Q10.2,2.9 9.3,4.8 L6.7,11.5 Q6.1,12.9 4.2,12.6" fill="none" stroke="#101c3c" stroke-width="1.15"/><path d="M6.6,6.6 L10.9,6.6" stroke="#101c3c" stroke-width="1.1"/></svg>
<div class="t" style="left:25px;top:144.80px;font-size:12px;font-weight:normal;letter-spacing:-0.800px;">sub_1260</div>
<svg style="position:absolute;left:3px;top:158px" width="16" height="15" viewBox="0 0 16 15"><rect x="0.5" y="0.5" width="15" height="14" fill="#eafcff" stroke="#2f6fd6"/><rect x="0.5" y="0" width="15" height="2.2" fill="url(#fgrad)"/><path d="M12,3.4 Q10.2,2.9 9.3,4.8 L6.7,11.5 Q6.1,12.9 4.2,12.6" fill="none" stroke="#101c3c" stroke-width="1.15"/><path d="M6.6,6.6 L10.9,6.6" stroke="#101c3c" stroke-width="1.1"/></svg>
<div class="t" style="left:25px;top:159.80px;font-size:12px;font-weight:normal;letter-spacing:-0.668px;">print_welcome_screen</div>
<svg style="position:absolute;left:3px;top:173px" width="16" height="15" viewBox="0 0 16 15"><rect x="0.5" y="0.5" width="15" height="14" fill="#eafcff" stroke="#2f6fd6"/><rect x="0.5" y="0" width="15" height="2.2" fill="url(#fgrad)"/><path d="M12,3.4 Q10.2,2.9 9.3,4.8 L6.7,11.5 Q6.1,12.9 4.2,12.6" fill="none" stroke="#101c3c" stroke-width="1.15"/><path d="M6.6,6.6 L10.9,6.6" stroke="#101c3c" stroke-width="1.1"/></svg>
<div class="t" style="left:25px;top:174.80px;font-size:12px;font-weight:normal;letter-spacing:-0.500px;">read_input</div>
<svg style="position:absolute;left:3px;top:188px" width="16" height="15" viewBox="0 0 16 15"><rect x="0.5" y="0.5" width="15" height="14" fill="#eafcff" stroke="#2f6fd6"/><rect x="0.5" y="0" width="15" height="2.2" fill="url(#fgrad)"/><path d="M12,3.4 Q10.2,2.9 9.3,4.8 L6.7,11.5 Q6.1,12.9 4.2,12.6" fill="none" stroke="#101c3c" stroke-width="1.15"/><path d="M6.6,6.6 L10.9,6.6" stroke="#101c3c" stroke-width="1.1"/></svg>
<div class="t" style="left:25px;top:189.80px;font-size:12px;font-weight:normal;letter-spacing:-0.386px;">read_int</div>
<svg style="position:absolute;left:3px;top:203px" width="16" height="15" viewBox="0 0 16 15"><rect x="0.5" y="0.5" width="15" height="14" fill="#eafcff" stroke="#2f6fd6"/><rect x="0.5" y="0" width="15" height="2.2" fill="url(#fgrad)"/><path d="M12,3.4 Q10.2,2.9 9.3,4.8 L6.7,11.5 Q6.1,12.9 4.2,12.6" fill="none" stroke="#101c3c" stroke-width="1.15"/><path d="M6.6,6.6 L10.9,6.6" stroke="#101c3c" stroke-width="1.1"/></svg>
<div class="t" style="left:25px;top:204.80px;font-size:12px;font-weight:bold;letter-spacing:0.100px;">add_gift</div>
<svg style="position:absolute;left:3px;top:218px" width="16" height="15" viewBox="0 0 16 15"><rect x="0.5" y="0.5" width="15" height="14" fill="#eafcff" stroke="#2f6fd6"/><rect x="0.5" y="0" width="15" height="2.2" fill="url(#fgrad)"/><path d="M12,3.4 Q10.2,2.9 9.3,4.8 L6.7,11.5 Q6.1,12.9 4.2,12.6" fill="none" stroke="#101c3c" stroke-width="1.15"/><path d="M6.6,6.6 L10.9,6.6" stroke="#101c3c" stroke-width="1.1"/></svg>
<div class="t" style="left:25px;top:219.80px;font-size:12px;font-weight:bold;letter-spacing:0.250px;">wrap_gift</div>
<svg style="position:absolute;left:3px;top:233px" width="16" height="15" viewBox="0 0 16 15"><rect x="0.5" y="0.5" width="15" height="14" fill="#eafcff" stroke="#2f6fd6"/><rect x="0.5" y="0" width="15" height="2.2" fill="url(#fgrad)"/><path d="M12,3.4 Q10.2,2.9 9.3,4.8 L6.7,11.5 Q6.1,12.9 4.2,12.6" fill="none" stroke="#101c3c" stroke-width="1.15"/><path d="M6.6,6.6 L10.9,6.6" stroke="#101c3c" stroke-width="1.1"/></svg>
<div class="t" style="left:25px;top:234.80px;font-size:12px;font-weight:bold;letter-spacing:0.280px;">return_gift</div>
<svg style="position:absolute;left:3px;top:248px" width="16" height="15" viewBox="0 0 16 15"><rect x="0.5" y="0.5" width="15" height="14" fill="#eafcff" stroke="#2f6fd6"/><rect x="0.5" y="0" width="15" height="2.2" fill="url(#fgrad)"/><path d="M12,3.4 Q10.2,2.9 9.3,4.8 L6.7,11.5 Q6.1,12.9 4.2,12.6" fill="none" stroke="#101c3c" stroke-width="1.15"/><path d="M6.6,6.6 L10.9,6.6" stroke="#101c3c" stroke-width="1.1"/></svg>
<div class="t" style="left:25px;top:249.80px;font-size:12px;font-weight:normal;letter-spacing:-0.325px;">read_gift</div>
<svg style="position:absolute;left:3px;top:263px" width="16" height="15" viewBox="0 0 16 15"><rect x="0.5" y="0.5" width="15" height="14" fill="#eafcff" stroke="#2f6fd6"/><rect x="0.5" y="0" width="15" height="2.2" fill="url(#fgrad)"/><path d="M12,3.4 Q10.2,2.9 9.3,4.8 L6.7,11.5 Q6.1,12.9 4.2,12.6" fill="none" stroke="#101c3c" stroke-width="1.15"/><path d="M6.6,6.6 L10.9,6.6" stroke="#101c3c" stroke-width="1.1"/></svg>
<div class="t" style="left:25px;top:264.80px;font-size:12px;font-weight:normal;letter-spacing:-1.067px;">main</div>
<svg style="position:absolute;left:3px;top:278px" width="16" height="15" viewBox="0 0 16 15"><rect x="0.5" y="0.5" width="15" height="14" fill="#eafcff" stroke="#2f6fd6"/><rect x="0.5" y="0" width="15" height="2.2" fill="url(#fgrad)"/><path d="M12,3.4 Q10.2,2.9 9.3,4.8 L6.7,11.5 Q6.1,12.9 4.2,12.6" fill="none" stroke="#101c3c" stroke-width="1.15"/><path d="M6.6,6.6 L10.9,6.6" stroke="#101c3c" stroke-width="1.1"/></svg>
<div class="t" style="left:25px;top:279.80px;font-size:12px;font-weight:normal;letter-spacing:-0.167px;">init</div>
<svg style="position:absolute;left:3px;top:293px" width="16" height="15" viewBox="0 0 16 15"><rect x="0.5" y="0.5" width="15" height="14" fill="#eafcff" stroke="#2f6fd6"/><rect x="0.5" y="0" width="15" height="2.2" fill="url(#fgrad)"/><path d="M12,3.4 Q10.2,2.9 9.3,4.8 L6.7,11.5 Q6.1,12.9 4.2,12.6" fill="none" stroke="#101c3c" stroke-width="1.15"/><path d="M6.6,6.6 L10.9,6.6" stroke="#101c3c" stroke-width="1.1"/></svg>
<div class="t" style="left:25px;top:294.80px;font-size:12px;font-weight:normal;letter-spacing:-0.300px;">fini</div>
<svg style="position:absolute;left:3px;top:308px" width="16" height="15" viewBox="0 0 16 15"><rect x="0.5" y="0.5" width="15" height="14" fill="#eafcff" stroke="#2f6fd6"/><rect x="0.5" y="0" width="15" height="2.2" fill="url(#fgrad)"/><path d="M12,3.4 Q10.2,2.9 9.3,4.8 L6.7,11.5 Q6.1,12.9 4.2,12.6" fill="none" stroke="#101c3c" stroke-width="1.15"/><path d="M6.6,6.6 L10.9,6.6" stroke="#101c3c" stroke-width="1.1"/></svg>
<div class="t" style="left:25px;top:309.80px;font-size:12px;font-weight:normal;">_i</div>
</div>
<div style="position:absolute;left:664px;top:203px;width:16px;height:314px;background:#f0f0f0;"></div>
<div style="position:absolute;left:664px;top:325px;width:15px;height:94px;background:#cdcdcd;"></div>
<svg style="position:absolute;left:667.0px;top:206.5px" width="10" height="10" viewBox="0 0 10 10"><polyline points="1.2,8.1 4.5,3.1 7.8,8.1" fill="none" stroke="#4a4a4a" stroke-width="1.9"/></svg>
<svg style="position:absolute;left:667.0px;top:505px" width="10" height="10" viewBox="0 0 10 10"><polyline points="1.1,0.6 4.5,4.6 7.9,0.6" fill="none" stroke="#4a4a4a" stroke-width="1.9"/></svg>
<div style="position:absolute;left:400px;top:517px;width:264px;height:16px;background:#f0f0f0;"></div>
<div style="position:absolute;left:417px;top:517px;width:51px;height:15px;background:#cdcdcd;"></div>
<svg style="position:absolute;left:404.5px;top:520.0px" width="10" height="10" viewBox="0 0 10 10"><polyline points="6.4,1.2 1.0,4.5 6.4,7.8" fill="none" stroke="#4a4a4a" stroke-width="1.9"/></svg>
<svg style="position:absolute;left:650.5px;top:520.0px" width="10" height="10" viewBox="0 0 10 10"><polyline points="0.6,1.2 5.9,4.5 0.6,7.8" fill="none" stroke="#4a4a4a" stroke-width="1.9"/></svg>
<div style="position:absolute;left:664px;top:517px;width:16px;height:16px;background:#f0f0f0;"></div>
<div class="t" style="left:405px;top:539.14px;font-size:12px;font-weight:normal;font-family:'Liberation Sans', sans-serif;color:#000;letter-spacing:-0.150px;">Line 30 of 56</div>
<div style="position:absolute;left:343px;top:558px;width:336px;height:86px;border:1px solid #828790;background:#fff;"></div>
<svg style="position:absolute;left:348px;top:565px" width="10" height="7" viewBox="0 0 10 7"><polyline points="1.3,1.3 5.4,5.4 9.5,1.3" fill="none" stroke="#404040" stroke-width="1.5"/></svg>
<svg style="position:absolute;left:369px;top:561px" width="14" height="16" viewBox="0 0 14 16"><rect x="0.5" y="0.5" width="11" height="14.2" fill="#fde68f" stroke="#e8c14a"/><rect x="0.5" y="0" width="11" height="1" fill="#f3d25e"/><rect x="10.3" y="8" width="2.2" height="6.7" rx="0.8" fill="#fde68f" stroke="#e8c14a"/></svg>
<div class="t" style="left:389px;top:564.14px;font-size:12px;font-weight:normal;font-family:'Liberation Sans', sans-serif;color:#000;letter-spacing:-0.371px;">sub_1260</div>
<div class="t" style="left:388.5px;top:586.29px;font-size:12.5px;font-weight:normal;font-family:'Liberation Mono', monospace;color:#000;letter-spacing:-0.5px">start_ea: 1260</div>
<div class="t" style="left:388.5px;top:601.09px;font-size:12.5px;font-weight:normal;font-family:'Liberation Mono', monospace;color:#000;letter-spacing:-0.5px">end_ea : 1299</div>
<div class="t" style="left:388.5px;top:616.09px;font-size:12.5px;font-weight:normal;font-family:'Liberation Mono', monospace;color:#000;letter-spacing:-0.5px">Attributes: sp-ready prolog-analysis-ok</div>
<div style="position:absolute;left:664px;top:559px;width:16px;height:70px;background:#f0f0f0;"></div>
<div style="position:absolute;left:664px;top:576px;width:15px;height:19px;background:#cdcdcd;"></div>
<svg style="position:absolute;left:667.0px;top:562.5px" width="10" height="10" viewBox="0 0 10 10"><polyline points="1.2,8.1 4.5,3.1 7.8,8.1" fill="none" stroke="#4a4a4a" stroke-width="1.9"/></svg>
<svg style="position:absolute;left:667.0px;top:617px" width="10" height="10" viewBox="0 0 10 10"><polyline points="1.1,0.6 4.5,4.6 7.9,0.6" fill="none" stroke="#4a4a4a" stroke-width="1.9"/></svg>
<div style="position:absolute;left:344px;top:629px;width:320px;height:16px;background:#f0f0f0;"></div>
<div style="position:absolute;left:361px;top:629px;width:201px;height:15px;background:#cdcdcd;"></div>
<svg style="position:absolute;left:348.5px;top:632.0px" width="10" height="10" viewBox="0 0 10 10"><polyline points="6.4,1.2 1.0,4.5 6.4,7.8" fill="none" stroke="#4a4a4a" stroke-width="1.9"/></svg>
<svg style="position:absolute;left:650.5px;top:632.0px" width="10" height="10" viewBox="0 0 10 10"><polyline points="0.6,1.2 5.9,4.5 0.6,7.8" fill="none" stroke="#4a4a4a" stroke-width="1.9"/></svg>
<div style="position:absolute;left:664px;top:629px;width:16px;height:16px;background:#f0f0f0;"></div>
<div style="position:absolute;left:685px;top:174px;width:337px;height:24px;border:1px solid #828790;background:#f0f0f0;"></div>
<svg style="position:absolute;left:689px;top:177px" width="17" height="17" viewBox="0 0 17 17"><ellipse cx="5.8" cy="5.4" rx="5.3" ry="4.2" fill="#2a2018"/><ellipse cx="1.9" cy="8" rx="1.4" ry="3.2" fill="#2a2018"/><ellipse cx="11.6" cy="10.6" rx="3.8" ry="5" fill="#181210"/><path d="M2.3,7.2 Q2.6,4 5.4,4.3 Q8.2,4.9 8.5,8.5 L8.9,12 L12.4,16.4 L6.2,16.6 L5,14.6 Q2.3,12.4 2.3,7.2 Z" fill="#d9bf8c"/><ellipse cx="4.6" cy="6.8" rx="1.9" ry="2" fill="#f0ddb0"/><ellipse cx="5.6" cy="11.4" rx="1" ry="0.8" fill="#b88a66"/><circle cx="12.7" cy="3.8" r="3.1" fill="#ff1452"/><ellipse cx="11.3" cy="7" rx="3" ry="1.6" fill="#8e1838"/></svg>
<div class="t" style="left:710.5px;top:180.64px;font-size:12px;font-weight:normal;font-family:'Liberation Sans', sans-serif;color:#000;letter-spacing:-0.740px;">Remote</div>
<div style="position:absolute;left:685px;top:202px;width:50px;height:352px;background:#fff;"></div>
<div style="position:absolute;left:685px;top:345px;width:48px;height:14px;border:1px solid #e86a3a;background:#ff7f4a;"></div>
<div style="position:absolute;left:741px;top:202px;width:281px;height:330px;border:1px solid #828790;background:#fff;"></div>
<div class="t" style="left:746.5px;top:208.64px;font-size:12px;font-weight:normal;font-family:'Liberation Sans', sans-serif;color:#000;">Function name</div>
<div style="position:absolute;left:742px;top:203px;width:264px;height:314px;overflow:hidden">
<div style="position:absolute;left:0;top:23px;width:264px;height:15px;background:#ffe6ff"></div>
<div style="position:absolute;left:0;top:38px;width:264px;height:15px;background:#ffe6ff"></div>
<div style="position:absolute;left:0;top:53px;width:264px;height:15px;background:#ffe6ff"></div>
<div style="position:absolute;left:0;top:68px;width:264px;height:15px;background:#ffe6ff"></div>
<div style="position:absolute;left:0;top:83px;width:264px;height:15px;background:#ffe6ff"></div>
<div style="position:absolute;left:0;top:143px;width:264px;height:15px;background:#ff7f4a"></div>
</div>
<div style="position:absolute;left:742px;top:203px;width:264px;height:314px;overflow:hidden">
<svg style="position:absolute;left:3px;top:23px" width="16" height="15" viewBox="0 0 16 15"><rect x="0.5" y="0.5" width="15" height="14" fill="#eafcff" stroke="#2f6fd6"/><rect x="0.5" y="0" width="15" height="2.2" fill="url(#fgrad)"/><path d="M12,3.4 Q10.2,2.9 9.3,4.8 L6.7,11.5 Q6.1,12.9 4.2,12.6" fill="none" stroke="#101c3c" stroke-width="1.15"/><path d="M6.6,6.6 L10.9,6.6" stroke="#101c3c" stroke-width="1.1"/></svg>
<div class="t" style="left:25px;top:24.80px;font-size:12px;font-weight:bold;letter-spacing:0.233px;">_malloc</div>
<svg style="position:absolute;left:3px;top:38px" width="16" height="15" viewBox="0 0 16 15"><rect x="0.5" y="0.5" width="15" height="14" fill="#eafcff" stroke="#2f6fd6"/><rect x="0.5" y="0" width="15" height="2.2" fill="url(#fgrad)"/><path d="M12,3.4 Q10.2,2.9 9.3,4.8 L6.7,11.5 Q6.1,12.9 4.2,12.6" fill="none" stroke="#101c3c" stroke-width="1.15"/><path d="M6.6,6.6 L10.9,6.6" stroke="#101c3c" stroke-width="1.1"/></svg>
<div class="t" style="left:25px;top:39.80px;font-size:12px;font-weight:bold;letter-spacing:-0.100px;">_fflush</div>
<svg style="position:absolute;left:3px;top:53px" width="16" height="15" viewBox="0 0 16 15"><rect x="0.5" y="0.5" width="15" height="14" fill="#eafcff" stroke="#2f6fd6"/><rect x="0.5" y="0" width="15" height="2.2" fill="url(#fgrad)"/><path d="M12,3.4 Q10.2,2.9 9.3,4.8 L6.7,11.5 Q6.1,12.9 4.2,12.6" fill="none" stroke="#101c3c" stroke-width="1.15"/><path d="M6.6,6.6 L10.9,6.6" stroke="#101c3c" stroke-width="1.1"/></svg>
<div class="t" style="left:25px;top:54.80px;font-size:12px;font-weight:bold;letter-spacing:0.171px;">_realloc</div>
<svg style="position:absolute;left:3px;top:68px" width="16" height="15" viewBox="0 0 16 15"><rect x="0.5" y="0.5" width="15" height="14" fill="#eafcff" stroke="#2f6fd6"/><rect x="0.5" y="0" width="15" height="2.2" fill="url(#fgrad)"/><path d="M12,3.4 Q10.2,2.9 9.3,4.8 L6.7,11.5 Q6.1,12.9 4.2,12.6" fill="none" stroke="#101c3c" stroke-width="1.15"/><path d="M6.6,6.6 L10.9,6.6" stroke="#101c3c" stroke-width="1.1"/></svg>
<div class="t" style="left:25px;top:69.80px;font-size:12px;font-weight:bold;letter-spacing:0.800px;">_atoi</div>
<svg style="position:absolute;left:3px;top:83px" width="16" height="15" viewBox="0 0 16 15"><rect x="0.5" y="0.5" width="15" height="14" fill="#eafcff" stroke="#2f6fd6"/><rect x="0.5" y="0" width="15" height="2.2" fill="url(#fgrad)"/><path d="M12,3.4 Q10.2,2.9 9.3,4.8 L6.7,11.5 Q6.1,12.9 4.2,12.6" fill="none" stroke="#101c3c" stroke-width="1.15"/><path d="M6.6,6.6 L10.9,6.6" stroke="#101c3c" stroke-width="1.1"/></svg>
<div class="t" style="left:25px;top:84.80px;font-size:12px;font-weight:normal;letter-spacing:-0.679px;">___isoc99_scanf</div>
<svg style="position:absolute;left:3px;top:98px" width="16" height="15" viewBox="0 0 16 15"><rect x="0.5" y="0.5" width="15" height="14" fill="#eafcff" stroke="#2f6fd6"/><rect x="0.5" y="0" width="15" height="2.2" fill="url(#fgrad)"/><path d="M12,3.4 Q10.2,2.9 9.3,4.8 L6.7,11.5 Q6.1,12.9 4.2,12.6" fill="none" stroke="#101c3c" stroke-width="1.15"/><path d="M6.6,6.6 L10.9,6.6" stroke="#101c3c" stroke-width="1.1"/></svg>
<div class="t" style="left:25px;top:99.80px;font-size:12px;font-weight:normal;letter-spacing:0.175px;">start</div>
<svg style="position:absolute;left:3px;top:113px" width="16" height="15" viewBox="0 0 16 15"><rect x="0.5" y="0.5" width="15" height="14" fill="#eafcff" stroke="#2f6fd6"/><rect x="0.5" y="0" width="15" height="2.2" fill="url(#fgrad)"/><path d="M12,3.4 Q10.2,2.9 9.3,4.8 L6.7,11.5 Q6.1,12.9 4.2,12.6" fill="none" stroke="#101c3c" stroke-width="1.15"/><path d="M6.6,6.6 L10.9,6.6" stroke="#101c3c" stroke-width="1.1"/></svg>
<div class="t" style="left:25px;top:114.80px;font-size:12px;font-weight:normal;letter-spacing:-0.470px;">finalizer_0</div>
<svg style="position:absolute;left:3px;top:128px" width="16" height="15" viewBox="0 0 16 15"><rect x="0.5" y="0.5" width="15" height="14" fill="#eafcff" stroke="#2f6fd6"/><rect x="0.5" y="0" width="15" height="2.2" fill="url(#fgrad)"/><path d="M12,3.4 Q10.2,2.9 9.3,4.8 L6.7,11.5 Q6.1,12.9 4.2,12.6" fill="none" stroke="#101c3c" stroke-width="1.15"/><path d="M6.6,6.6 L10.9,6.6" stroke="#101c3c" stroke-width="1.1"/></svg>
<div class="t" style="left:25px;top:129.80px;font-size:12px;font-weight:normal;letter-spacing:-0.700px;">sub_1220</div>
<svg style="position:absolute;left:3px;top:143px" width="16" height="15" viewBox="0 0 16 15"><rect x="0.5" y="0.5" width="15" height="14" fill="#eafcff" stroke="#2f6fd6"/><rect x="0.5" y="0" width="15" height="2.2" fill="url(#fgrad)"/><path d="M12,3.4 Q10.2,2.9 9.3,4.8 L6.7,11.5 Q6.1,12.9 4.2,12.6" fill="none" stroke="#101c3c" stroke-width="1.15"/><path d="M6.6,6.6 L10.9,6.6" stroke="#101c3c" stroke-width="1.1"/></svg>
<div class="t" style="left:25px;top:144.80px;font-size:12px;font-weight:normal;letter-spacing:-0.594px;">call_global_dtors</div>
<svg style="position:absolute;left:3px;top:158px" width="16" height="15" viewBox="0 0 16 15"><rect x="0.5" y="0.5" width="15" height="14" fill="#eafcff" stroke="#2f6fd6"/><rect x="0.5" y="0" width="15" height="2.2" fill="url(#fgrad)"/><path d="M12,3.4 Q10.2,2.9 9.3,4.8 L6.7,11.5 Q6.1,12.9 4.2,12.6" fill="none" stroke="#101c3c" stroke-width="1.15"/><path d="M6.6,6.6 L10.9,6.6" stroke="#101c3c" stroke-width="1.1"/></svg>
<div class="t" style="left:25px;top:159.80px;font-size:12px;font-weight:normal;letter-spacing:-0.668px;">print_welcome_screen</div>
<svg style="position:absolute;left:3px;top:173px" width="16" height="15" viewBox="0 0 16 15"><rect x="0.5" y="0.5" width="15" height="14" fill="#eafcff" stroke="#2f6fd6"/><rect x="0.5" y="0" width="15" height="2.2" fill="url(#fgrad)"/><path d="M12,3.4 Q10.2,2.9 9.3,4.8 L6.7,11.5 Q6.1,12.9 4.2,12.6" fill="none" stroke="#101c3c" stroke-width="1.15"/><path d="M6.6,6.6 L10.9,6.6" stroke="#101c3c" stroke-width="1.1"/></svg>
<div class="t" style="left:25px;top:174.80px;font-size:12px;font-weight:normal;letter-spacing:-0.439px;">read_stdin</div>
<svg style="position:absolute;left:3px;top:188px" width="16" height="15" viewBox="0 0 16 15"><rect x="0.5" y="0.5" width="15" height="14" fill="#eafcff" stroke="#2f6fd6"/><rect x="0.5" y="0" width="15" height="2.2" fill="url(#fgrad)"/><path d="M12,3.4 Q10.2,2.9 9.3,4.8 L6.7,11.5 Q6.1,12.9 4.2,12.6" fill="none" stroke="#101c3c" stroke-width="1.15"/><path d="M6.6,6.6 L10.9,6.6" stroke="#101c3c" stroke-width="1.1"/></svg>
<div class="t" style="left:25px;top:189.80px;font-size:12px;font-weight:normal;letter-spacing:-0.386px;">read_int</div>
<svg style="position:absolute;left:3px;top:203px" width="16" height="15" viewBox="0 0 16 15"><rect x="0.5" y="0.5" width="15" height="14" fill="#eafcff" stroke="#2f6fd6"/><rect x="0.5" y="0" width="15" height="2.2" fill="url(#fgrad)"/><path d="M12,3.4 Q10.2,2.9 9.3,4.8 L6.7,11.5 Q6.1,12.9 4.2,12.6" fill="none" stroke="#101c3c" stroke-width="1.15"/><path d="M6.6,6.6 L10.9,6.6" stroke="#101c3c" stroke-width="1.1"/></svg>
<div class="t" style="left:25px;top:204.80px;font-size:12px;font-weight:bold;letter-spacing:0.100px;">add_gift</div>
<svg style="position:absolute;left:3px;top:218px" width="16" height="15" viewBox="0 0 16 15"><rect x="0.5" y="0.5" width="15" height="14" fill="#eafcff" stroke="#2f6fd6"/><rect x="0.5" y="0" width="15" height="2.2" fill="url(#fgrad)"/><path d="M12,3.4 Q10.2,2.9 9.3,4.8 L6.7,11.5 Q6.1,12.9 4.2,12.6" fill="none" stroke="#101c3c" stroke-width="1.15"/><path d="M6.6,6.6 L10.9,6.6" stroke="#101c3c" stroke-width="1.1"/></svg>
<div class="t" style="left:25px;top:219.80px;font-size:12px;font-weight:bold;letter-spacing:0.250px;">wrap_gift</div>
<svg style="position:absolute;left:3px;top:233px" width="16" height="15" viewBox="0 0 16 15"><rect x="0.5" y="0.5" width="15" height="14" fill="#eafcff" stroke="#2f6fd6"/><rect x="0.5" y="0" width="15" height="2.2" fill="url(#fgrad)"/><path d="M12,3.4 Q10.2,2.9 9.3,4.8 L6.7,11.5 Q6.1,12.9 4.2,12.6" fill="none" stroke="#101c3c" stroke-width="1.15"/><path d="M6.6,6.6 L10.9,6.6" stroke="#101c3c" stroke-width="1.1"/></svg>
<div class="t" style="left:25px;top:234.80px;font-size:12px;font-weight:bold;letter-spacing:0.280px;">return_gift</div>
<svg style="position:absolute;left:3px;top:248px" width="16" height="15" viewBox="0 0 16 15"><rect x="0.5" y="0.5" width="15" height="14" fill="#eafcff" stroke="#2f6fd6"/><rect x="0.5" y="0" width="15" height="2.2" fill="url(#fgrad)"/><path d="M12,3.4 Q10.2,2.9 9.3,4.8 L6.7,11.5 Q6.1,12.9 4.2,12.6" fill="none" stroke="#101c3c" stroke-width="1.15"/><path d="M6.6,6.6 L10.9,6.6" stroke="#101c3c" stroke-width="1.1"/></svg>
<div class="t" style="left:25px;top:249.80px;font-size:12px;font-weight:normal;letter-spacing:-0.325px;">read_gift</div>
<svg style="position:absolute;left:3px;top:263px" width="16" height="15" viewBox="0 0 16 15"><rect x="0.5" y="0.5" width="15" height="14" fill="#eafcff" stroke="#2f6fd6"/><rect x="0.5" y="0" width="15" height="2.2" fill="url(#fgrad)"/><path d="M12,3.4 Q10.2,2.9 9.3,4.8 L6.7,11.5 Q6.1,12.9 4.2,12.6" fill="none" stroke="#101c3c" stroke-width="1.15"/><path d="M6.6,6.6 L10.9,6.6" stroke="#101c3c" stroke-width="1.1"/></svg>
<div class="t" style="left:25px;top:264.80px;font-size:12px;font-weight:normal;letter-spacing:-1.067px;">main</div>
<svg style="position:absolute;left:3px;top:278px" width="16" height="15" viewBox="0 0 16 15"><rect x="0.5" y="0.5" width="15" height="14" fill="#eafcff" stroke="#2f6fd6"/><rect x="0.5" y="0" width="15" height="2.2" fill="url(#fgrad)"/><path d="M12,3.4 Q10.2,2.9 9.3,4.8 L6.7,11.5 Q6.1,12.9 4.2,12.6" fill="none" stroke="#101c3c" stroke-width="1.15"/><path d="M6.6,6.6 L10.9,6.6" stroke="#101c3c" stroke-width="1.1"/></svg>
<div class="t" style="left:25px;top:279.80px;font-size:12px;font-weight:normal;letter-spacing:-0.167px;">init</div>
<svg style="position:absolute;left:3px;top:293px" width="16" height="15" viewBox="0 0 16 15"><rect x="0.5" y="0.5" width="15" height="14" fill="#eafcff" stroke="#2f6fd6"/><rect x="0.5" y="0" width="15" height="2.2" fill="url(#fgrad)"/><path d="M12,3.4 Q10.2,2.9 9.3,4.8 L6.7,11.5 Q6.1,12.9 4.2,12.6" fill="none" stroke="#101c3c" stroke-width="1.15"/><path d="M6.6,6.6 L10.9,6.6" stroke="#101c3c" stroke-width="1.1"/></svg>
<div class="t" style="left:25px;top:294.80px;font-size:12px;font-weight:normal;letter-spacing:-0.300px;">fini</div>
<svg style="position:absolute;left:3px;top:308px" width="16" height="15" viewBox="0 0 16 15"><rect x="0.5" y="0.5" width="15" height="14" fill="#eafcff" stroke="#2f6fd6"/><rect x="0.5" y="0" width="15" height="2.2" fill="url(#fgrad)"/><path d="M12,3.4 Q10.2,2.9 9.3,4.8 L6.7,11.5 Q6.1,12.9 4.2,12.6" fill="none" stroke="#101c3c" stroke-width="1.15"/><path d="M6.6,6.6 L10.9,6.6" stroke="#101c3c" stroke-width="1.1"/></svg>
<div class="t" style="left:25px;top:309.80px;font-size:12px;font-weight:normal;">_i</div>
</div>
<div style="position:absolute;left:1007px;top:203px;width:16px;height:314px;background:#f0f0f0;"></div>
<div style="position:absolute;left:1007px;top:328px;width:15px;height:92px;background:#cdcdcd;"></div>
<svg style="position:absolute;left:1010.0px;top:206.5px" width="10" height="10" viewBox="0 0 10 10"><polyline points="1.2,8.1 4.5,3.1 7.8,8.1" fill="none" stroke="#4a4a4a" stroke-width="1.9"/></svg>
<svg style="position:absolute;left:1010.0px;top:505px" width="10" height="10" viewBox="0 0 10 10"><polyline points="1.1,0.6 4.5,4.6 7.9,0.6" fill="none" stroke="#4a4a4a" stroke-width="1.9"/></svg>
<div style="position:absolute;left:742px;top:517px;width:265px;height:16px;background:#f0f0f0;"></div>
<div style="position:absolute;left:759px;top:517px;width:51px;height:15px;background:#cdcdcd;"></div>
<svg style="position:absolute;left:746.5px;top:520.0px" width="10" height="10" viewBox="0 0 10 10"><polyline points="6.4,1.2 1.0,4.5 6.4,7.8" fill="none" stroke="#4a4a4a" stroke-width="1.9"/></svg>
<svg style="position:absolute;left:993.5px;top:520.0px" width="10" height="10" viewBox="0 0 10 10"><polyline points="0.6,1.2 5.9,4.5 0.6,7.8" fill="none" stroke="#4a4a4a" stroke-width="1.9"/></svg>
<div style="position:absolute;left:1007px;top:517px;width:16px;height:16px;background:#f0f0f0;"></div>
<div class="t" style="left:747.5px;top:539.14px;font-size:12px;font-weight:normal;font-family:'Liberation Sans', sans-serif;color:#000;letter-spacing:-0.250px;">Line 31 of 57</div>
<div style="position:absolute;left:685px;top:558px;width:337px;height:86px;border:1px solid #828790;background:#fff;"></div>
<svg style="position:absolute;left:690px;top:565px" width="10" height="7" viewBox="0 0 10 7"><polyline points="1.3,1.3 5.4,5.4 9.5,1.3" fill="none" stroke="#404040" stroke-width="1.5"/></svg>
<svg style="position:absolute;left:711px;top:561px" width="14" height="16" viewBox="0 0 14 16"><rect x="0.5" y="0.5" width="11" height="14.2" fill="#fde68f" stroke="#e8c14a"/><rect x="0.5" y="0" width="11" height="1" fill="#f3d25e"/><rect x="10.3" y="8" width="2.2" height="6.7" rx="0.8" fill="#fde68f" stroke="#e8c14a"/></svg>
<div class="t" style="left:731px;top:564.14px;font-size:12px;font-weight:normal;font-family:'Liberation Sans', sans-serif;color:#000;letter-spacing:-0.100px;">call_global_dtors</div>
<div class="t" style="left:730.5px;top:586.29px;font-size:12.5px;font-weight:normal;font-family:'Liberation Mono', monospace;color:#000;letter-spacing:-0.5px">start_ea: 1260</div>
<div class="t" style="left:730.5px;top:601.09px;font-size:12.5px;font-weight:normal;font-family:'Liberation Mono', monospace;color:#000;letter-spacing:-0.5px">end_ea : 1299</div>
<div class="t" style="left:730.5px;top:616.09px;font-size:12.5px;font-weight:normal;font-family:'Liberation Mono', monospace;color:#000;letter-spacing:-0.5px">Attributes: sp-ready prolog-analysis-ok</div>
<div style="position:absolute;left:1007px;top:559px;width:16px;height:70px;background:#f0f0f0;"></div>
<div style="position:absolute;left:1007px;top:576px;width:15px;height:19px;background:#cdcdcd;"></div>
<svg style="position:absolute;left:1010.0px;top:562.5px" width="10" height="10" viewBox="0 0 10 10"><polyline points="1.2,8.1 4.5,3.1 7.8,8.1" fill="none" stroke="#4a4a4a" stroke-width="1.9"/></svg>
<svg style="position:absolute;left:1010.0px;top:617px" width="10" height="10" viewBox="0 0 10 10"><polyline points="1.1,0.6 4.5,4.6 7.9,0.6" fill="none" stroke="#4a4a4a" stroke-width="1.9"/></svg>
<div style="position:absolute;left:686px;top:629px;width:321px;height:16px;background:#f0f0f0;"></div>
<div style="position:absolute;left:703px;top:629px;width:201px;height:15px;background:#cdcdcd;"></div>
<svg style="position:absolute;left:690.5px;top:632.0px" width="10" height="10" viewBox="0 0 10 10"><polyline points="6.4,1.2 1.0,4.5 6.4,7.8" fill="none" stroke="#4a4a4a" stroke-width="1.9"/></svg>
<svg style="position:absolute;left:993.5px;top:632.0px" width="10" height="10" viewBox="0 0 10 10"><polyline points="0.6,1.2 5.9,4.5 0.6,7.8" fill="none" stroke="#4a4a4a" stroke-width="1.9"/></svg>
<div style="position:absolute;left:1007px;top:629px;width:16px;height:16px;background:#f0f0f0;"></div>
<div style="position:absolute;left:0px;top:646px;width:1022px;height:28px;border:1px solid #828790;background:#f0f0f0;"></div>
<div style="position:absolute;left:1px;top:647px;width:1022px;height:1px;background:#f8f8f8;"></div>
<svg style="position:absolute;left:5px;top:652px" width="14" height="16" viewBox="0 0 14 16"><rect x="0.5" y="0.5" width="13" height="15" fill="#eef4fb" stroke="#55708a"/><rect x="0" y="0" width="14" height="2.5" fill="url(#bgrad)"/><path d="M3,6 H11 M3,8.5 H11 M3,11 H11 M3,13.3 H11" stroke="#40546a" stroke-width="1"/></svg>
<div class="t" style="left:25.5px;top:654.74px;font-size:12px;font-weight:normal;font-family:'Liberation Sans', sans-serif;color:#000;letter-spacing:-0.250px;">Output</div>
<svg style="position:absolute;left:952px;top:656px" width="12" height="12" viewBox="0 0 12 12"><rect x="1.5" y="1.5" width="9" height="9" fill="#e6e6e6" stroke="#333"/><rect x="1" y="1" width="10" height="2" fill="#333"/></svg>
<svg style="position:absolute;left:980px;top:656px" width="11" height="12" viewBox="0 0 11 12"><rect x="3.5" y="1.5" width="5.5" height="5" fill="#f0f0f0" stroke="#222"/><rect x="1.5" y="4.5" width="5.5" height="5" fill="#f0f0f0" stroke="#222"/></svg>
<svg style="position:absolute;left:1005px;top:657px" width="10" height="10" viewBox="0 0 10 10"><path d="M1.5,1.5 L8.5,8.5 M8.5,1.5 L1.5,8.5" stroke="#333" stroke-width="1.6"/></svg>
<div style="position:absolute;left:0px;top:678px;width:1022px;height:68px;border:1px solid #828282;background:#fff;"></div>
<div style="position:absolute;left:1px;top:679px;width:1005px;height:68px;overflow:hidden">
<div class="t" style="left:6px;top:-3.81px;font-size:12.5px;letter-spacing:-0.5px;font-family:'Liberation Mono', monospace">    5: 0000000000004D60..0000000000005010</div>
<div class="t" style="left:6px;top:11.19px;font-size:12.5px;letter-spacing:-0.5px;font-family:'Liberation Mono', monospace">Caching 'Local:Functions'... ok</div>
<div class="t" style="left:6px;top:26.19px;font-size:12.5px;letter-spacing:-0.5px;font-family:'Liberation Mono', monospace">Caching 'Common:Functions'... ok</div>
<div class="t" style="left:6px;top:41.19px;font-size:12.5px;letter-spacing:-0.5px;font-family:'Liberation Mono', monospace">Caching 'Remote:Functions'... ok</div>
<div class="t" style="left:6px;top:56.19px;font-size:12.5px;letter-spacing:-0.5px;font-family:'Liberation Mono', monospace">append_sync_command() called w/ no collecting operation.</div>
</div>
<div style="position:absolute;left:1007px;top:679px;width:16px;height:68px;background:#f0f0f0;"></div>
<div style="position:absolute;left:1007px;top:712px;width:15px;height:17px;background:#cdcdcd;"></div>
<svg style="position:absolute;left:1010.0px;top:682.5px" width="10" height="10" viewBox="0 0 10 10"><polyline points="1.2,8.1 4.5,3.1 7.8,8.1" fill="none" stroke="#4a4a4a" stroke-width="1.9"/></svg>
<svg style="position:absolute;left:1010.0px;top:735px" width="10" height="10" viewBox="0 0 10 10"><polyline points="1.1,0.6 4.5,4.6 7.9,0.6" fill="none" stroke="#4a4a4a" stroke-width="1.9"/></svg>
<div class="t" style="left:2px;top:754.09px;font-size:12.5px;font-weight:normal;font-family:'Liberation Mono', monospace;color:#000;letter-spacing:-0.5px">AU:  idle</div>
<div class="t" style="left:85px;top:754.09px;font-size:12.5px;font-weight:normal;font-family:'Liberation Mono', monospace;color:#000;letter-spacing:-0.5px">Down</div>
<div style="position:absolute;left:80px;top:750px;width:1px;height:17px;background:#d0d0d0;"></div>
<div style="position:absolute;left:156px;top:750px;width:1px;height:17px;background:#d0d0d0;"></div>
<div style="position:absolute;left:232px;top:750px;width:1px;height:17px;background:#d0d0d0;"></div>
<div style="position:absolute;left:1020px;top:758px;width:2px;height:2px;background:#bdbdbd;"></div>
<div style="position:absolute;left:1017px;top:761px;width:2px;height:2px;background:#bdbdbd;"></div>
<div style="position:absolute;left:1020px;top:761px;width:2px;height:2px;background:#bdbdbd;"></div>
<div style="position:absolute;left:1014px;top:764px;width:2px;height:2px;background:#bdbdbd;"></div>
<div style="position:absolute;left:1017px;top:764px;width:2px;height:2px;background:#bdbdbd;"></div>
<div style="position:absolute;left:1020px;top:764px;width:2px;height:2px;background:#bdbdbd;"></div>
</body></html>
